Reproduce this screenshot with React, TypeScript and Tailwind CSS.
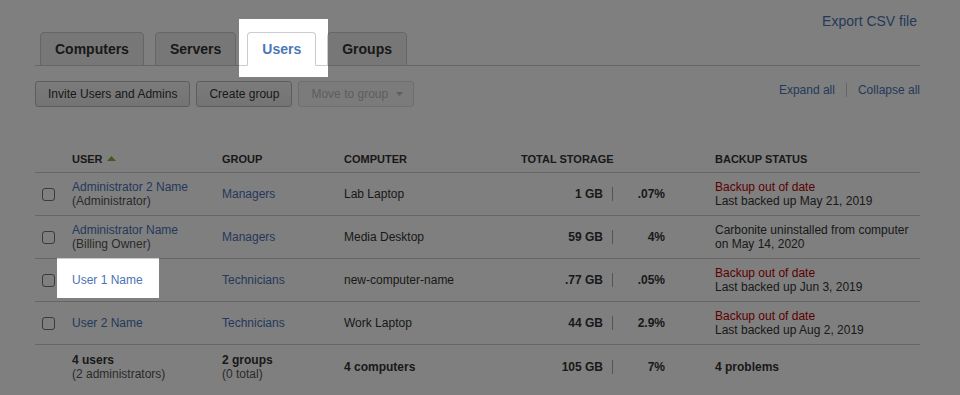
import React from "react";

const LINK = "text-[#4a73b4]";

type Row = {
  name: string;
  role?: string;
  group: string;
  computer: string;
  gb: string;
  pct: string;
  red?: string;
  status: string[];
};

const rows: Row[] = [
  {
    name: "Administrator 2 Name",
    role: "(Administrator)",
    group: "Managers",
    computer: "Lab Laptop",
    gb: "1 GB",
    pct: ".07%",
    red: "Backup out of date",
    status: ["Last backed up May 21, 2019"],
  },
  {
    name: "Administrator Name",
    role: "(Billing Owner)",
    group: "Managers",
    computer: "Media Desktop",
    gb: "59 GB",
    pct: "4%",
    status: ["Carbonite uninstalled from computer", "on May 14, 2020"],
  },
  {
    name: "User 1 Name",
    group: "Technicians",
    computer: "new-computer-name",
    gb: ".77 GB",
    pct: ".05%",
    red: "Backup out of date",
    status: ["Last backed up Jun 3, 2019"],
  },
  {
    name: "User 2 Name",
    group: "Technicians",
    computer: "Work Laptop",
    gb: "44 GB",
    pct: "2.9%",
    red: "Backup out of date",
    status: ["Last backed up Aug 2, 2019"],
  },
];

const GRID =
  "grid grid-cols-[37px_150px_122px_177px_92px_52px_50px_1fr] items-center";

function Tab({ label, active }: { label: string; active?: boolean }) {
  return (
    <div
      className={
        "h-[34px] -mb-px flex items-center px-[14px] border border-[#cccccc] rounded-t-[4px] text-[14px] font-bold leading-[16px] " +
        (active
          ? "bg-white border-b-white text-[#4a78b8]"
          : "bg-[#eeeeee] text-[#333333]")
      }
    >
      {label}
    </div>
  );
}

function Btn({ children }: { children: React.ReactNode }) {
  return (
    <button className="h-[26px] px-3 border border-[#bbbbbb] rounded-[3px] bg-linear-to-b from-[#f7f7f7] to-[#e8e8e8] text-[12px] text-[#333333] leading-[14px]">
      {children}
    </button>
  );
}

function Storage({ gb, pct }: { gb: string; pct: string }) {
  return (
    <>
      <div className="flex items-center justify-end font-bold">
        <span>{gb}</span>
        <span className="ml-[9px] w-px h-[14px] bg-[#aaaaaa]" />
      </div>
      <div className="text-right font-bold">{pct}</div>
      <div />
    </>
  );
}

export default function App() {
  return (
    <div
      className="relative w-[960px] h-[395px] overflow-hidden bg-white text-[#333333]"
      style={{ fontFamily: '"Liberation Sans", Arial, sans-serif' }}
    >
      <div className="pl-[35px] pr-[40px] pt-[13px]">
        <div className="h-[19px] flex justify-end pr-[3px]">
          <span className={"text-[14px] leading-[16px] " + LINK}>
            Export CSV file
          </span>
        </div>

        <div className="h-[34px] flex items-end gap-[11px] pl-[5px] border-b border-[#cccccc]">
          <Tab label="Computers" />
          <Tab label="Servers" />
          <Tab label="Users" active />
          <Tab label="Groups" />
        </div>

        <div className="mt-[15px] flex justify-between items-start">
          <div className="flex gap-[6px]">
            <Btn>Invite Users and Admins</Btn>
            <Btn>Create group</Btn>
            <button className="h-[26px] pl-3 pr-[10px] border border-[#dddddd] rounded-[3px] bg-[#f6f6f6] text-[12px] text-[#bdbdbd] leading-[14px] flex items-center">
              Move to group
              <svg className="ml-[8px]" width="7" height="4" viewBox="0 0 7 4">
                <path d="M0 0H7L3.5 4Z" fill="#bdbdbd" />
              </svg>
            </button>
          </div>
          <div className="flex items-center pt-[1px] text-[12px] leading-[16px]">
            <span className={LINK}>Expand all</span>
            <span className="mx-[11px] w-px h-[14px] bg-[#cccccc]" />
            <span className={LINK}>Collapse all</span>
          </div>
        </div>

        <div className="mt-[35px] text-[12px] leading-[14px]">
          <div
            className={
              GRID +
              " h-[31px] pt-[3px] border-b border-[#cccccc] text-[11px] font-bold text-[#333333]"
            }
          >
            <div />
            <div className="flex items-center">
              USER
              <svg className="ml-[4px]" width="9" height="5" viewBox="0 0 9 5">
                <path d="M0 5L4.5 0L9 5Z" fill="#8fb13c" />
              </svg>
            </div>
            <div>GROUP</div>
            <div>COMPUTER</div>
            <div className="col-span-3">TOTAL STORAGE</div>
            <div>BACKUP STATUS</div>
          </div>

          {rows.map((r) => (
            <div
              key={r.name}
              className={GRID + " h-[43px] border-b border-[#cccccc]"}
            >
              <div className="pl-[7px]">
                <span className="block w-[13px] h-[13px] border border-[#767676] rounded-[3px] bg-white" />
              </div>
              <div>
                <div className={LINK}>{r.name}</div>
                {r.role && <div className="text-[#555555]">{r.role}</div>}
              </div>
              <div className={LINK}>{r.group}</div>
              <div>{r.computer}</div>
              <Storage gb={r.gb} pct={r.pct} />
              <div>
                {r.red && <div className="text-[#b80000]">{r.red}</div>}
                {r.status.map((s) => (
                  <div key={s}>{s}</div>
                ))}
              </div>
            </div>
          ))}

          <div className={GRID + " h-[43px]"}>
            <div />
            <div>
              <div className="font-bold">4 users</div>
              <div className="text-[#555555]">(2 administrators)</div>
            </div>
            <div>
              <div className="font-bold">2 groups</div>
              <div className="text-[#555555]">(0 total)</div>
            </div>
            <div className="font-bold">4 computers</div>
            <Storage gb="105 GB" pct="7%" />
            <div className="font-bold">4 problems</div>
          </div>
        </div>
      </div>

      <svg
        className="absolute top-0 left-0 pointer-events-none"
        width="960"
        height="395"
        viewBox="0 0 960 395"
      >
        <path
          fillRule="evenodd"
          fill="rgba(0,0,0,0.5)"
          d="M0 0H960V395H0Z M239 19H328V77H239Z M57 258H159V298H57Z"
        />
      </svg>
    </div>
  );
}
